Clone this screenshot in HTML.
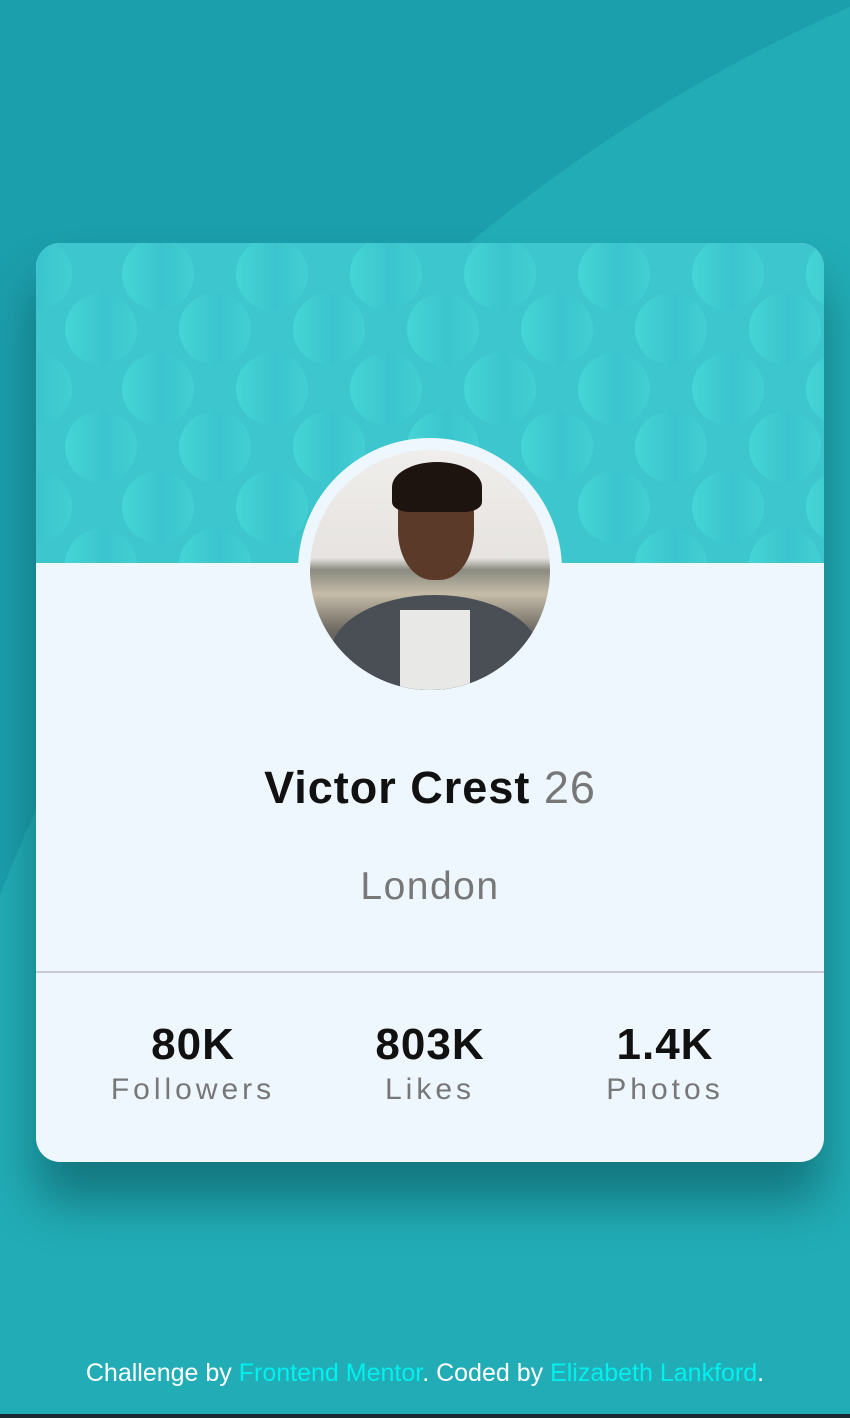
<!DOCTYPE html>
<html style="overflow:hidden;width:850px;height:1418px"><head><style>
*{margin:0;padding:0;box-sizing:border-box}
body{width:850px;height:1418px;overflow:hidden;position:relative;background:#1c9fac;font-family:"Liberation Sans",sans-serif}
.wrap{position:absolute;left:0;top:0;width:850px;height:1418px;overflow:hidden}
.bg1{position:absolute;border-radius:50%;background:#22adb6}
.strip{position:absolute;left:0;top:1414px;width:850px;height:4px;background:#1b2a30}
.card{position:absolute;left:36px;top:243px;width:788px;height:919px;border-radius:24px;background:#eff7fe;overflow:hidden;box-shadow:0 40px 50px rgba(0,50,60,.45)}
.head{position:absolute;left:0;top:0;width:788px;height:320px;background:#3ec6cf;overflow:hidden}
.c{position:absolute;width:72px;height:72px;border-radius:50%;background:linear-gradient(90deg,#45d6d6,#3bc4cd 55%,#42cfd3)}
.av{position:absolute;left:262px;top:195px;width:264px;height:264px;border-radius:50%;background:#eff7fe}
.ph{position:absolute;left:12px;top:12px;width:240px;height:240px;border-radius:50%;overflow:hidden;background:linear-gradient(#f0eeec 0,#e6e3e0 45%,#8a8a80 50%,#c5bca8 60%,#6e6a62 75%,#3c3d40 100%)}
.face{position:absolute;left:88px;top:20px;width:76px;height:110px;border-radius:40% 40% 45% 45%;background:#5b3a2a}
.hair{position:absolute;left:82px;top:12px;width:90px;height:50px;border-radius:50% 50% 20% 20%;background:#1d1410}
.body{position:absolute;left:20px;top:145px;width:210px;height:120px;border-radius:50% 50% 0 0;background:#4a4f55}
.shirt{position:absolute;left:90px;top:160px;width:70px;height:90px;background:#e8e8e6}
.name{position:absolute;top:519px;width:788px;text-align:center;font-size:45px;font-weight:bold;color:#111;letter-spacing:1px}
.name span{font-weight:normal;color:#777}
.city{position:absolute;top:622px;width:788px;text-align:center;font-size:39px;color:#777;letter-spacing:1.5px}
.hr{position:absolute;top:728px;left:0;width:788px;height:2px;background:#c8ccd0}
.st{position:absolute;top:777px;width:260px;text-align:center}
.st b{display:block;font-size:44px;color:#111;line-height:50px;letter-spacing:1px}
.st i{display:block;font-style:normal;font-size:30px;color:#777;letter-spacing:4px;line-height:40px}
.foot{position:absolute;top:1359px;width:850px;text-align:center;color:#fff;font-size:25px}
.foot a{color:#00f0f0;text-decoration:none}
</style></head><body><div class="wrap">
<div class="bg1" style="left:-110px;top:-130px;width:3220px;height:3220px"></div>
<div class="card">
<div class="head">
<div class="c" style="left:-36px;top:-5px"></div><div class="c" style="left:86px;top:-5px"></div><div class="c" style="left:200px;top:-5px"></div><div class="c" style="left:314px;top:-5px"></div><div class="c" style="left:428px;top:-5px"></div><div class="c" style="left:542px;top:-5px"></div><div class="c" style="left:656px;top:-5px"></div><div class="c" style="left:770px;top:-5px"></div>
<div class="c" style="left:29px;top:50px"></div><div class="c" style="left:143px;top:50px"></div><div class="c" style="left:257px;top:50px"></div><div class="c" style="left:371px;top:50px"></div><div class="c" style="left:485px;top:50px"></div><div class="c" style="left:599px;top:50px"></div><div class="c" style="left:713px;top:50px"></div>
<div class="c" style="left:-36px;top:110px"></div><div class="c" style="left:86px;top:110px"></div><div class="c" style="left:200px;top:110px"></div><div class="c" style="left:314px;top:110px"></div><div class="c" style="left:428px;top:110px"></div><div class="c" style="left:542px;top:110px"></div><div class="c" style="left:656px;top:110px"></div><div class="c" style="left:770px;top:110px"></div>
<div class="c" style="left:29px;top:168px"></div><div class="c" style="left:143px;top:168px"></div><div class="c" style="left:257px;top:168px"></div><div class="c" style="left:371px;top:168px"></div><div class="c" style="left:485px;top:168px"></div><div class="c" style="left:599px;top:168px"></div><div class="c" style="left:713px;top:168px"></div>
<div class="c" style="left:-36px;top:228px"></div><div class="c" style="left:86px;top:228px"></div><div class="c" style="left:200px;top:228px"></div><div class="c" style="left:314px;top:228px"></div><div class="c" style="left:428px;top:228px"></div><div class="c" style="left:542px;top:228px"></div><div class="c" style="left:656px;top:228px"></div><div class="c" style="left:770px;top:228px"></div>
<div class="c" style="left:29px;top:286px"></div><div class="c" style="left:143px;top:286px"></div><div class="c" style="left:599px;top:286px"></div><div class="c" style="left:713px;top:286px"></div>
</div>
<div class="av"><div class="ph"><div class="body"></div><div class="shirt"></div><div class="face"></div><div class="hair"></div></div></div>
<div class="name">Victor Crest <span>26</span></div>
<div class="city">London</div>
<div class="hr"></div>
<div class="st" style="left:27px"><b>80K</b><i>Followers</i></div>
<div class="st" style="left:264px"><b>803K</b><i>Likes</i></div>
<div class="st" style="left:499px"><b>1.4K</b><i>Photos</i></div>
</div>
<div class="foot">Challenge by <a>Frontend Mentor</a>. Coded by <a>Elizabeth Lankford</a>.</div>
<div class="strip"></div>
</div></body></html>
